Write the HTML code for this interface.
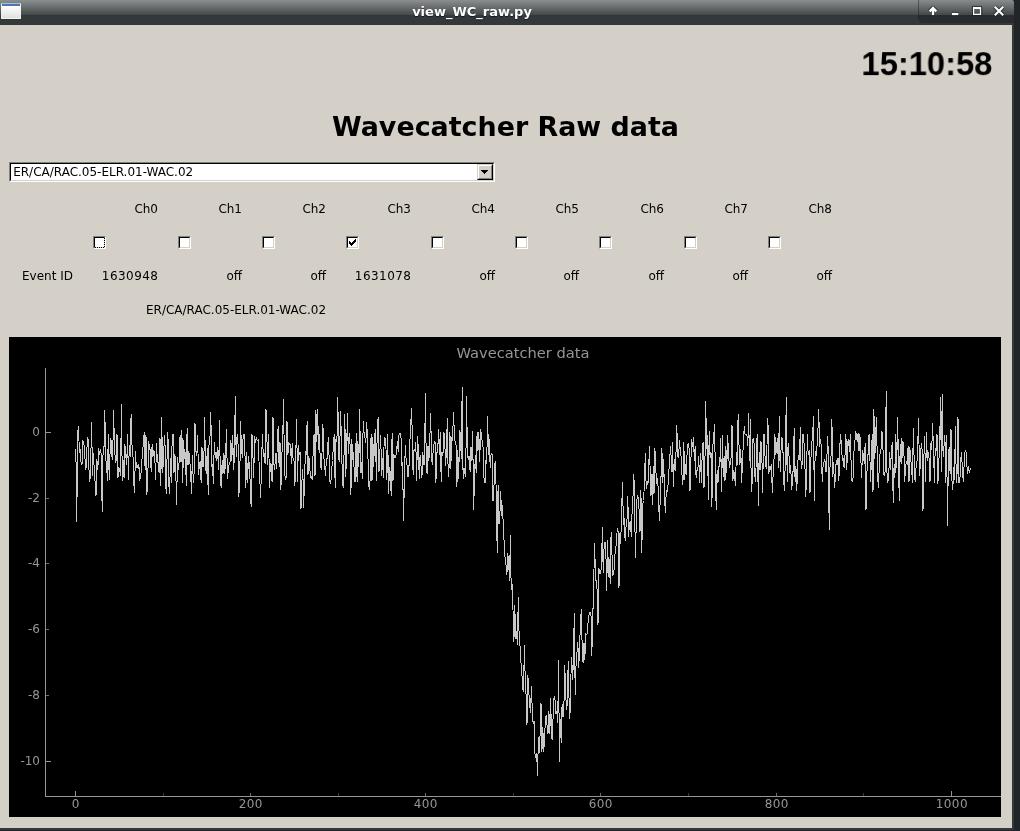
<!DOCTYPE html>
<html><head><meta charset="utf-8"><title>view_WC_raw.py</title>
<style>
html,body{margin:0;padding:0;}
body{will-change:transform;width:1020px;height:831px;overflow:hidden;background:#d4d0c8;position:relative;font-family:"DejaVu Sans","Liberation Sans",sans-serif;font-size:12px;color:#000;}
.abs{position:absolute;white-space:nowrap;}
#tb{left:0;top:0;width:1014px;height:25px;border-radius:0 3px 0 0;background:linear-gradient(#8b8f8f 0px,#43484a 15px,#33383b 15px,#33383b 25px);}
#tbtitle{left:0;top:0;width:944px;text-align:center;font-weight:bold;font-size:13px;line-height:24px;color:#fff;text-shadow:0 1px 1px rgba(0,0,0,.6);}
#tbbtn{left:918px;top:0;width:96px;height:23px;box-sizing:border-box;border-radius:0 3px 0 6px;border-left:1px solid rgba(30,34,36,.45);background:linear-gradient(#888c8c 0px,#42474a 15px,#282c2e 15px,#282c2e 23px);}
#rb{left:1014px;top:0;width:6px;height:831px;background:#212527;}
#rbw{left:1012px;top:25px;width:2px;height:805px;background:#33383b;}
#tbk{left:1008px;top:0;width:12px;height:25px;background:#212527;}
#bb{left:0;top:828px;width:1014px;height:2px;background:#33383b;}
#bb2{left:0;top:830px;width:1020px;height:1px;background:#212527;}
#icon{left:1px;top:3px;width:20px;height:16px;box-sizing:border-box;border:1px solid #f2f2ef;border-top-color:#a9bfde;border-radius:1px;background:linear-gradient(#4f76ad 0,#4f76ad 2px,#ffffff 2px,#e0e2dc 100%);}
#clock{left:700px;top:45.3px;width:292.4px;transform-origin:100% 30px;transform:scale(.991,1.03);text-align:right;font-family:"Liberation Sans",sans-serif;font-weight:bold;font-size:33px;line-height:38px;}
#h1{left:0;top:110px;width:1011px;text-align:center;font-weight:bold;font-size:26.9px;line-height:34px;}
#combo{left:9px;top:162px;width:486px;height:20px;box-sizing:border-box;background:#fff;border:1px solid;border-color:#808080 #fff #fff #808080;}
#combo .in{position:absolute;left:0;top:0;right:0;bottom:0;border:1px solid;border-color:#000 #d4d0c8 #d4d0c8 #000;}
#combotxt{left:13.200px;top:165px;line-height:15px;}
#cbtn{left:477px;top:164px;width:16px;height:16px;box-sizing:border-box;background:#d4d0c8;border:1px solid;border-color:#d4d0c8 #000 #000 #d4d0c8;}
#cbtn i{position:absolute;left:0;top:0;right:0;bottom:0;border:1px solid;border-color:#fff #808080 #808080 #fff;}
#cbtn svg{position:absolute;left:-1px;top:-1px;}
.ch{width:60px;text-align:right;top:202px;line-height:15px;}
.ev{width:70px;text-align:right;top:269px;line-height:15px;}
.num{letter-spacing:.45px;text-indent:.45px;direction:ltr}
.cb{top:236px;width:13px;height:13px;box-sizing:border-box;background:#fff;border:1px solid;border-color:#808080 #fff #fff #808080;}
.cb i{position:absolute;left:0;top:0;right:0;bottom:0;border:1px solid;border-color:#000 #d4d0c8 #d4d0c8 #000;}
#plot{left:9px;top:337px;width:992px;height:480px;background:#000;}
</style></head><body>
<div id="tbk" class="abs"></div>
<div id="tb" class="abs"></div>
<div id="tbbtn" class="abs"></div>
<div id="tbtitle" class="abs">view_WC_raw.py</div>
<div id="icon" class="abs"></div>
<svg class="abs" style="left:918px;top:0" width="94" height="24" viewBox="0 0 94 24">
<g fill="none" stroke="#1d2123" stroke-opacity=".75" stroke-linejoin="round">
<path d="M15 15V8.500M11.700 11.300L15 8l3.300 3.300" stroke-width="4.400"/>
<path d="M34 14h6.300" stroke-width="4.200"/>
<path d="M54.400 6.400h9.400v9.200h-9.400z" stroke-width="1"/>
<path d="M76.800 6.800l8.400 8.400M85.200 6.800l-8.400 8.400" stroke-width="4"/>
</g>
<g fill="none" stroke="#fff">
<path d="M15 15V8.500M11.700 11.300L15 8l3.300 3.300" stroke-width="2.400"/>
<path d="M34 14h6.300" stroke-width="2.200"/>
<path d="M55 7h8.100v8.100h-8.100zM56.200 9.100h5.700v4.700h-5.700z" fill="#fff" fill-rule="evenodd" stroke="none"/>
<path d="M76.800 6.800l8.400 8.400M85.200 6.800l-8.400 8.400" stroke-width="2.100"/>
</g></svg>
<div id="hl" class="abs"></div>
<div id="rb" class="abs"></div>
<div id="rbw" class="abs"></div>
<div id="bb" class="abs"></div>
<div id="bb2" class="abs"></div>
<div id="clock" class="abs">15:10:58</div>
<div id="h1" class="abs">Wavecatcher Raw data</div>
<div id="combo" class="abs"><div class="in"></div></div>
<div id="combotxt" class="abs">ER/CA/RAC.05-ELR.01-WAC.02</div>
<div id="cbtn" class="abs"><i></i><svg width="16" height="16" viewBox="0 0 16 16" shape-rendering="crispEdges"><path d="M4 6h7v1h-7zM5 7h5v1h-5zM6 8h3v1h-3zM7 9h1v1h-1z" fill="#000"/></svg></div>
<div class="abs ch" style="left:98px" id="ch0">Ch0</div>
<div class="abs ch" style="left:182px">Ch1</div>
<div class="abs ch" style="left:266px">Ch2</div>
<div class="abs ch" style="left:351px">Ch3</div>
<div class="abs ch" style="left:435px">Ch4</div>
<div class="abs ch" style="left:519px">Ch5</div>
<div class="abs ch" style="left:604px">Ch6</div>
<div class="abs ch" style="left:688px">Ch7</div>
<div class="abs ch" style="left:772px">Ch8</div>
<div class="abs cb" style="left:93px" id="cb0"><i></i><svg style="position:absolute;left:-1px;top:-1px" width="13" height="13" viewBox="0 0 13 13" shape-rendering="crispEdges"><path fill="#000" d="M11 2h1v1h-1zM11 4h1v1h-1zM11 6h1v1h-1zM11 8h1v1h-1zM11 10h1v1h-1zM2 11h1v1h-1zM4 11h1v1h-1zM6 11h1v1h-1zM8 11h1v1h-1zM10 11h1v1h-1z"/></svg></div>
<div class="abs cb" style="left:178px"><i></i></div>
<div class="abs cb" style="left:262px"><i></i></div>
<div class="abs cb" style="left:346px"><i></i><svg style="position:absolute;left:-1px;top:-1px" width="13" height="13" viewBox="0 0 13 13" shape-rendering="crispEdges"><path fill="#000" d="M3 5h1v3h-1zM4 6h1v3h-1zM5 7h1v3h-1zM6 6h1v3h-1zM7 5h1v3h-1zM8 4h1v3h-1zM9 3h1v3h-1z"/></svg></div>
<div class="abs cb" style="left:431px"><i></i></div>
<div class="abs cb" style="left:515px"><i></i></div>
<div class="abs cb" style="left:599px"><i></i></div>
<div class="abs cb" style="left:684px"><i></i></div>
<div class="abs cb" style="left:768px"><i></i></div>
<div class="abs" style="left:22px;top:269px;line-height:15px" id="evid">Event ID</div>
<div class="abs ev num" style="left:88.450px" id="ev0">1630948</div>
<div class="abs ev" style="left:172px">off</div>
<div class="abs ev" style="left:256px">off</div>
<div class="abs ev num" style="left:341.450px">1631078</div>
<div class="abs ev" style="left:425px">off</div>
<div class="abs ev" style="left:509px">off</div>
<div class="abs ev" style="left:594px">off</div>
<div class="abs ev" style="left:678px">off</div>
<div class="abs ev" style="left:762px">off</div>
<div class="abs" style="left:146px;top:303px;line-height:15px" id="dev">ER/CA/RAC.05-ELR.01-WAC.02</div>
<div id="plot" class="abs">
<svg width="992" height="480" viewBox="0 0 992 480" style="position:absolute;left:0;top:0">
<g shape-rendering="crispEdges" stroke="#969696" stroke-width="1" fill="none">
<path d="M36.500 31V460M36 459.500H992"/>
<path d="M37 95.500h5M37 424.500h5M66.500 454v5M942.500 454v5"/>
<path stroke="#6e6e6e" d="M37 161.500h3M37 226.500h3M37 292.500h3M37 358.500h3M241.500 456v3M416.500 456v3M591.500 456v3M767.500 456v3"/>
<path stroke="#383838" d="M154.500 456v3M329.500 456v3M504.500 456v3M679.500 456v3M854.500 456v3"/>
</g>
<g font-family="DejaVu Sans, sans-serif" font-size="12" fill="#969696">
<text x="514" y="21" text-anchor="middle" font-size="14.670" id="ptitle">Wavecatcher data</text>
<g text-anchor="end">
<text x="31" y="99">0</text><text x="31" y="165">-2</text><text x="31" y="230">-4</text><text x="31" y="296">-6</text><text x="31" y="362">-8</text><text x="31" y="428">-10</text>
</g>
<g text-anchor="middle" letter-spacing=".45">
<text x="66.800" y="471">0</text><text x="241.800" y="471">200</text><text x="416.800" y="471">400</text><text x="591.800" y="471">600</text><text x="767.800" y="471">800</text><text x="942.800" y="471">1000</text>
</g></g>
<polyline shape-rendering="crispEdges" fill="none" stroke="#c8c8c8" stroke-width="1" points="66.0,112.0 66.9,116.3 67.8,184.5 68.6,97.0 69.5,89.3 70.4,115.8 71.3,112.2 72.1,126.2 73.0,128.0 73.9,103.5 74.8,106.5 75.6,113.3 76.5,132.4 77.4,130.3 78.3,99.6 79.1,102.7 80.0,133.2 80.9,145.1 81.8,120.6 82.6,85.4 83.5,139.2 84.4,116.1 85.3,133.1 86.1,145.2 87.0,159.2 87.9,122.4 88.8,133.2 89.7,110.6 90.5,118.3 91.4,111.8 92.3,117.8 93.2,175.3 94.0,118.2 94.9,115.0 95.8,73.3 96.7,122.3 97.5,126.1 98.4,144.3 99.3,97.3 100.2,142.6 101.0,117.4 101.9,101.0 102.8,118.5 103.7,122.8 104.5,73.3 105.4,103.9 106.3,124.9 107.2,123.3 108.0,97.3 108.9,140.7 109.8,131.2 110.7,132.8 111.6,139.3 112.4,67.4 113.3,144.4 114.2,123.4 115.1,141.3 115.9,107.5 116.8,119.1 117.7,127.8 118.6,97.4 119.4,143.0 120.3,108.4 121.2,120.3 122.1,77.5 122.9,107.8 123.8,112.8 124.7,145.5 125.6,155.5 126.4,114.4 127.3,130.0 128.2,129.0 129.1,131.3 129.9,127.6 130.8,143.7 131.7,138.2 132.6,131.3 133.5,110.3 134.3,109.8 135.2,95.5 136.1,132.9 137.0,97.6 137.8,158.4 138.7,145.6 139.6,104.1 140.5,110.3 141.3,113.8 142.2,135.3 143.1,107.4 144.0,119.5 144.8,113.0 145.7,117.5 146.6,142.9 147.5,105.8 148.3,122.8 149.2,126.1 150.1,135.8 151.0,100.9 151.8,148.8 152.7,80.0 153.6,136.1 154.5,122.9 155.4,97.7 156.2,111.1 157.1,156.7 158.0,122.3 158.9,95.2 159.7,145.7 160.6,156.7 161.5,121.2 162.4,145.8 163.2,97.8 164.1,97.8 165.0,136.1 165.9,117.5 166.7,131.3 167.6,167.7 168.5,120.3 169.4,133.0 170.2,124.3 171.1,97.8 172.0,125.4 172.9,93.2 173.7,145.9 174.6,103.3 175.5,122.2 176.4,114.9 177.3,148.8 178.1,91.5 179.0,128.1 179.9,114.3 180.8,124.4 181.6,134.5 182.5,156.7 183.4,117.6 184.3,145.9 185.1,136.0 186.0,86.4 186.9,114.1 187.8,119.4 188.6,98.0 189.5,137.5 190.4,127.6 191.3,124.3 192.1,145.8 193.0,110.2 193.9,130.4 194.8,126.2 195.6,80.0 196.5,130.3 197.4,137.4 198.3,110.8 199.2,157.6 200.0,107.6 200.9,102.9 201.8,75.0 202.7,130.3 203.5,127.4 204.4,147.4 205.3,104.7 206.2,120.7 207.0,115.0 207.9,123.8 208.8,110.3 209.7,132.6 210.5,82.6 211.4,145.8 212.3,150.8 213.2,122.9 214.0,136.9 214.9,115.6 215.8,136.9 216.7,115.5 217.5,92.2 218.4,142.4 219.3,133.2 220.2,126.2 221.1,124.8 221.9,102.9 222.8,124.0 223.7,98.0 224.6,133.1 225.4,119.5 226.3,59.0 227.2,119.9 228.1,97.6 228.9,99.1 229.8,159.6 230.7,145.6 231.6,84.2 232.4,110.0 233.3,120.8 234.2,97.6 235.1,97.6 235.9,114.8 236.8,151.2 237.7,115.1 238.6,145.5 239.4,118.8 240.3,127.4 241.2,145.5 242.1,169.7 243.0,97.5 243.8,115.3 244.7,140.6 245.6,98.8 246.5,106.2 247.3,100.1 248.2,103.3 249.1,102.8 250.0,124.3 250.8,142.3 251.7,160.6 252.6,121.6 253.5,97.4 254.3,120.4 255.2,115.8 256.1,127.1 257.0,72.1 257.8,97.3 258.7,128.1 259.6,97.3 260.5,150.5 261.3,126.4 262.2,127.1 263.1,145.3 264.0,80.0 264.9,126.9 265.7,132.6 266.6,115.9 267.5,131.7 268.4,103.1 269.2,89.3 270.1,130.1 271.0,105.1 271.9,152.5 272.7,118.1 273.6,110.4 274.5,62.3 275.4,124.0 276.2,142.8 277.1,140.5 278.0,84.2 278.9,117.9 279.7,105.5 280.6,107.9 281.5,107.9 282.4,126.8 283.2,106.5 284.1,122.4 285.0,124.2 285.9,148.8 286.8,118.0 287.6,82.2 288.5,145.0 289.4,108.1 290.3,117.8 291.1,114.9 292.0,171.9 292.9,145.0 293.8,132.3 294.6,170.7 295.5,145.0 296.4,113.7 297.3,117.9 298.1,84.2 299.0,137.8 299.9,119.4 300.8,131.5 301.6,140.1 302.5,140.0 303.4,143.2 304.3,107.9 305.1,96.9 306.0,139.3 306.9,73.0 307.8,105.4 308.7,72.1 309.5,113.4 310.4,96.8 311.3,124.9 312.2,133.1 313.0,115.9 313.9,87.1 314.8,119.2 315.7,129.7 316.5,138.7 317.4,121.3 318.3,121.5 319.2,100.2 320.0,117.9 320.9,144.7 321.8,146.6 322.7,132.7 323.5,123.5 324.4,108.7 325.3,96.7 326.2,151.2 327.0,101.6 327.9,104.8 328.8,59.8 329.7,121.6 330.6,125.2 331.4,74.1 332.3,96.6 333.2,134.8 334.1,150.5 334.9,124.2 335.8,77.0 336.7,140.0 337.6,116.9 338.4,76.1 339.3,116.7 340.2,96.5 341.1,108.1 341.9,158.4 342.8,101.6 343.7,123.2 344.6,115.3 345.4,144.5 346.3,144.4 347.2,96.4 348.1,145.4 348.9,104.0 349.8,129.6 350.7,72.1 351.6,135.7 352.5,125.5 353.3,142.4 354.2,84.2 355.1,96.4 356.0,100.9 356.8,106.3 357.7,85.1 358.6,103.7 359.5,144.3 360.3,153.3 361.2,141.6 362.1,97.3 363.0,144.3 363.8,100.5 364.7,130.1 365.6,98.4 366.5,92.2 367.3,144.2 368.2,96.2 369.1,80.1 370.0,134.9 370.8,117.1 371.7,97.7 372.6,139.2 373.5,121.0 374.4,141.4 375.2,100.3 376.1,101.2 377.0,112.2 377.9,142.9 378.7,97.3 379.6,156.8 380.5,130.0 381.4,136.8 382.2,159.3 383.1,96.1 384.0,144.1 384.9,117.4 385.7,120.3 386.6,120.0 387.5,116.2 388.4,104.1 389.2,114.6 390.1,96.4 391.0,97.6 391.9,96.0 392.7,128.8 393.6,125.5 394.5,184.0 395.4,143.9 396.3,107.9 397.1,122.7 398.0,128.1 398.9,140.0 399.8,136.6 400.6,105.9 401.5,97.0 402.4,71.1 403.3,95.6 404.1,137.9 405.0,113.1 405.9,113.7 406.8,104.9 407.6,143.5 408.5,99.5 409.4,112.7 410.3,142.4 411.1,118.0 412.0,129.2 412.9,141.1 413.8,115.0 414.6,127.7 415.5,127.2 416.4,56.1 417.3,129.0 418.2,137.4 419.0,108.6 419.9,124.0 420.8,101.9 421.7,76.2 422.5,120.1 423.4,128.1 424.3,110.5 425.2,105.8 426.0,104.0 426.9,146.2 427.8,115.3 428.7,115.1 429.5,92.2 430.4,117.9 431.3,94.8 432.2,145.0 433.0,114.8 433.9,119.1 434.8,95.2 435.7,100.7 436.5,128.6 437.4,115.2 438.3,81.4 439.2,139.5 440.1,129.5 440.9,94.6 441.8,132.3 442.7,99.8 443.6,103.5 444.4,75.0 445.3,94.4 446.2,106.2 447.1,108.6 447.9,150.0 448.8,113.0 449.7,141.7 450.6,94.3 451.4,95.4 452.3,122.3 453.2,50.1 454.1,142.4 454.9,130.8 455.8,136.0 456.7,139.7 457.6,59.0 458.4,117.9 459.3,121.8 460.2,118.9 461.1,134.8 462.0,110.0 462.8,124.4 463.7,94.5 464.6,172.8 465.5,142.7 466.3,118.4 467.2,136.1 468.1,95.2 469.0,113.8 469.8,95.5 470.7,124.8 471.6,92.2 472.5,97.3 473.3,106.1 474.2,110.5 475.1,144.3 476.0,146.2 476.8,122.6 477.7,126.7 478.6,79.2 479.5,118.0 480.3,101.8 481.2,131.4 482.1,116.5 483.0,116.6 483.9,164.4 484.7,158.4 485.6,128.6 486.5,124.2 487.4,164.7 488.2,216.0 489.1,148.1 490.0,186.9 490.9,177.1 491.7,154.2 492.6,179.3 493.5,168.4 494.4,191.8 495.2,206.7 496.1,221.4 497.0,227.6 497.9,238.0 498.7,216.5 499.6,223.4 500.5,244.0 501.4,198.0 502.2,253.0 503.1,247.5 504.0,273.0 504.9,304.7 505.8,268.2 506.6,302.4 507.5,294.2 508.4,308.3 509.3,260.2 510.1,298.5 511.0,309.0 511.9,325.0 512.8,335.1 513.6,350.3 514.5,355.2 515.4,308.3 516.3,346.7 517.1,358.5 518.0,387.7 518.9,338.4 519.8,355.1 520.6,366.4 521.5,375.6 522.4,349.2 523.3,373.7 524.1,386.5 525.0,383.9 525.9,416.5 526.8,420.5 527.7,415.8 528.5,439.4 529.4,399.9 530.3,416.2 531.2,395.1 532.0,366.0 532.9,414.9 533.8,389.7 534.7,415.3 535.5,402.1 536.4,382.8 537.3,378.0 538.2,390.7 539.0,396.6 539.9,373.9 540.8,397.1 541.7,361.2 542.5,400.1 543.4,403.3 544.3,372.2 545.2,358.8 546.0,362.7 546.9,376.6 547.8,374.0 548.7,385.5 549.6,322.7 550.4,425.0 551.3,381.8 552.2,405.7 553.1,366.7 553.9,380.4 554.8,376.1 555.7,327.6 556.6,353.2 557.4,372.7 558.3,367.1 559.2,324.0 560.1,364.3 560.9,381.7 561.8,341.7 562.7,320.0 563.6,343.2 564.4,323.0 565.3,275.8 566.2,357.6 567.1,326.0 567.9,316.6 568.8,305.5 569.7,331.2 570.6,309.5 571.5,284.8 572.3,272.2 573.2,310.6 574.1,326.4 575.0,306.0 575.8,323.1 576.7,297.1 577.6,297.8 578.5,295.8 579.3,280.7 580.2,277.0 581.1,275.5 582.0,278.4 582.8,319.1 583.7,281.7 584.6,253.0 585.5,206.0 586.3,231.6 587.2,246.5 588.1,252.6 589.0,287.8 589.8,231.3 590.7,236.2 591.6,236.9 592.5,228.3 593.4,190.4 594.2,235.9 595.1,209.8 596.0,205.1 596.9,216.5 597.7,254.1 598.6,202.9 599.5,240.1 600.4,221.9 601.2,247.0 602.1,195.2 603.0,217.5 603.9,238.1 604.7,237.3 605.6,224.2 606.5,209.5 607.4,208.7 608.2,191.6 609.1,194.0 610.0,250.5 610.9,195.7 611.7,206.6 612.6,175.3 613.5,144.7 614.4,188.0 615.3,181.0 616.1,203.6 617.0,189.7 617.9,185.5 618.8,159.2 619.6,199.9 620.5,185.8 621.4,183.9 622.3,200.0 623.1,174.3 624.0,159.2 624.9,137.5 625.8,184.9 626.6,220.5 627.5,167.3 628.4,158.5 629.3,161.3 630.1,172.9 631.0,195.1 631.9,153.3 632.8,215.7 633.6,168.7 634.5,163.5 635.4,147.9 636.3,115.8 637.2,152.0 638.0,144.0 638.9,148.3 639.8,126.2 640.7,109.4 641.5,158.8 642.4,136.9 643.3,167.6 644.2,128.9 645.0,156.9 645.9,111.0 646.8,133.1 647.7,147.1 648.5,141.3 649.4,154.9 650.3,184.4 651.2,164.0 652.0,140.0 652.9,111.0 653.8,145.7 654.7,122.1 655.5,160.3 656.4,176.0 657.3,153.0 658.2,155.2 659.1,147.2 659.9,133.7 660.8,120.0 661.7,108.6 662.6,135.4 663.4,105.0 664.3,149.5 665.2,121.9 666.1,134.3 666.9,119.3 667.8,88.1 668.7,119.1 669.6,121.0 670.4,103.3 671.3,112.6 672.2,120.4 673.1,140.3 673.9,148.3 674.8,105.2 675.7,142.8 676.6,127.3 677.4,137.9 678.3,109.5 679.2,106.2 680.1,111.3 681.0,154.3 681.8,125.8 682.7,102.4 683.6,109.5 684.5,100.2 685.3,123.8 686.2,108.9 687.1,141.1 688.0,132.9 688.8,133.6 689.7,118.8 690.6,145.8 691.5,116.3 692.3,146.0 693.2,117.7 694.1,104.7 695.0,150.8 695.8,135.7 696.7,64.0 697.6,111.5 698.5,97.9 699.3,162.6 700.2,94.3 701.1,120.5 702.0,114.7 702.9,169.7 703.7,110.1 704.6,102.0 705.5,87.1 706.4,136.3 707.2,172.7 708.1,133.4 709.0,145.8 709.9,129.9 710.7,130.0 711.6,101.3 712.5,154.5 713.4,97.8 714.2,140.1 715.1,118.9 716.0,143.6 716.9,108.9 717.7,136.2 718.6,97.7 719.5,115.0 720.4,130.7 721.2,127.5 722.1,120.7 723.0,88.1 723.9,143.5 724.8,132.6 725.6,140.5 726.5,149.1 727.4,115.4 728.3,128.1 729.1,77.0 730.0,107.7 730.9,128.3 731.8,112.3 732.6,145.6 733.5,124.4 734.4,104.3 735.3,89.3 736.1,98.1 737.0,97.5 737.9,97.5 738.8,109.4 739.6,76.1 740.5,123.9 741.4,82.2 742.3,154.5 743.1,145.5 744.0,101.8 744.9,101.2 745.8,137.8 746.7,145.4 747.5,106.8 748.4,97.4 749.3,168.5 750.2,114.6 751.0,133.2 751.9,103.6 752.8,116.9 753.7,155.9 754.5,97.4 755.4,97.4 756.3,128.7 757.2,130.4 758.0,108.0 758.9,81.2 759.8,136.8 760.7,129.0 761.5,131.4 762.4,127.0 763.3,155.9 764.2,135.6 765.0,122.3 765.9,97.3 766.8,118.4 767.7,107.2 768.6,101.2 769.4,131.1 770.3,79.2 771.2,135.0 772.1,110.4 772.9,100.5 773.8,106.5 774.7,145.2 775.6,153.8 776.4,116.3 777.3,60.1 778.2,145.1 779.1,106.4 779.9,116.2 780.8,136.4 781.7,127.7 782.6,152.5 783.4,145.1 784.3,129.5 785.2,91.0 786.1,145.0 786.9,129.1 787.8,153.8 788.7,126.0 789.6,118.2 790.5,123.1 791.3,90.1 792.2,131.9 793.1,127.1 794.0,97.0 794.8,102.6 795.7,116.4 796.6,160.1 797.5,145.0 798.3,97.0 799.2,118.3 800.1,113.1 801.0,155.9 801.8,124.3 802.7,106.4 803.6,98.5 804.5,79.2 805.3,164.0 806.2,113.7 807.1,118.7 808.0,109.1 808.8,97.0 809.7,72.1 810.6,109.5 811.5,101.9 812.4,110.6 813.2,145.0 814.1,128.2 815.0,124.7 815.9,122.2 816.7,135.2 817.6,133.0 818.5,98.8 819.4,116.6 820.2,193.3 821.1,124.3 822.0,119.6 822.9,82.3 823.7,139.9 824.6,125.0 825.5,150.9 826.4,139.8 827.2,122.6 828.1,128.4 829.0,121.0 829.9,143.7 830.7,111.9 831.6,97.0 832.5,110.0 833.4,123.4 834.3,120.9 835.1,131.2 836.0,118.6 836.9,97.0 837.8,132.5 838.6,106.5 839.5,102.2 840.4,114.7 841.3,97.1 842.1,126.0 843.0,143.7 843.9,145.0 844.8,115.7 845.6,110.5 846.5,94.6 847.4,97.0 848.3,105.2 849.1,96.4 850.0,114.2 850.9,97.0 851.8,120.5 852.6,141.4 853.5,112.7 854.4,119.0 855.3,127.0 856.2,106.5 857.0,172.9 857.9,136.0 858.8,123.2 859.7,99.5 860.5,97.0 861.4,145.0 862.3,127.7 863.2,97.0 864.0,154.5 864.9,72.4 865.8,122.4 866.7,97.0 867.5,80.5 868.4,130.5 869.3,150.9 870.2,132.0 871.0,116.9 871.9,115.0 872.8,94.0 873.7,97.0 874.5,137.5 875.4,138.3 876.3,133.5 877.2,54.3 878.1,145.0 878.9,145.0 879.8,135.8 880.7,114.6 881.6,132.6 882.4,113.1 883.3,105.1 884.2,166.2 885.1,127.2 885.9,141.2 886.8,97.0 887.7,131.4 888.6,80.5 889.4,123.3 890.3,164.4 891.2,106.8 892.1,127.2 892.9,101.2 893.8,121.3 894.7,105.4 895.6,144.6 896.4,132.9 897.3,123.7 898.2,127.5 899.1,108.9 900.0,145.1 900.8,110.1 901.7,122.1 902.6,131.6 903.5,145.5 904.3,91.3 905.2,125.1 906.1,145.2 907.0,131.1 907.8,128.6 908.7,108.4 909.6,81.4 910.5,138.7 911.3,128.9 912.2,106.4 913.1,112.8 914.0,173.5 914.8,122.3 915.7,98.8 916.6,145.4 917.5,94.6 918.3,123.8 919.2,114.6 920.1,121.2 921.0,145.4 921.9,106.1 922.7,113.2 923.6,86.3 924.5,112.7 925.4,145.5 926.2,111.4 927.1,114.3 928.0,97.5 928.9,147.3 929.7,125.6 930.6,113.8 931.5,59.7 932.4,135.2 933.2,57.0 934.1,120.2 935.0,109.0 935.9,97.6 936.7,145.6 937.6,97.7 938.5,189.3 939.4,118.7 940.2,109.9 941.1,136.7 942.0,92.2 942.9,143.0 943.8,153.0 944.6,130.3 945.5,143.3 946.4,89.5 947.3,145.8 948.1,136.4 949.0,80.5 949.9,145.2 950.8,145.8 951.6,123.8 952.5,115.0 953.4,133.0 954.3,144.6 955.1,128.0 956.0,115.0 956.9,113.3 957.8,127.4 958.6,137.4 959.5,129.2 960.4,136.4 961.3,132.0 962.1,131.0"/>
</svg></div>
</body></html>
